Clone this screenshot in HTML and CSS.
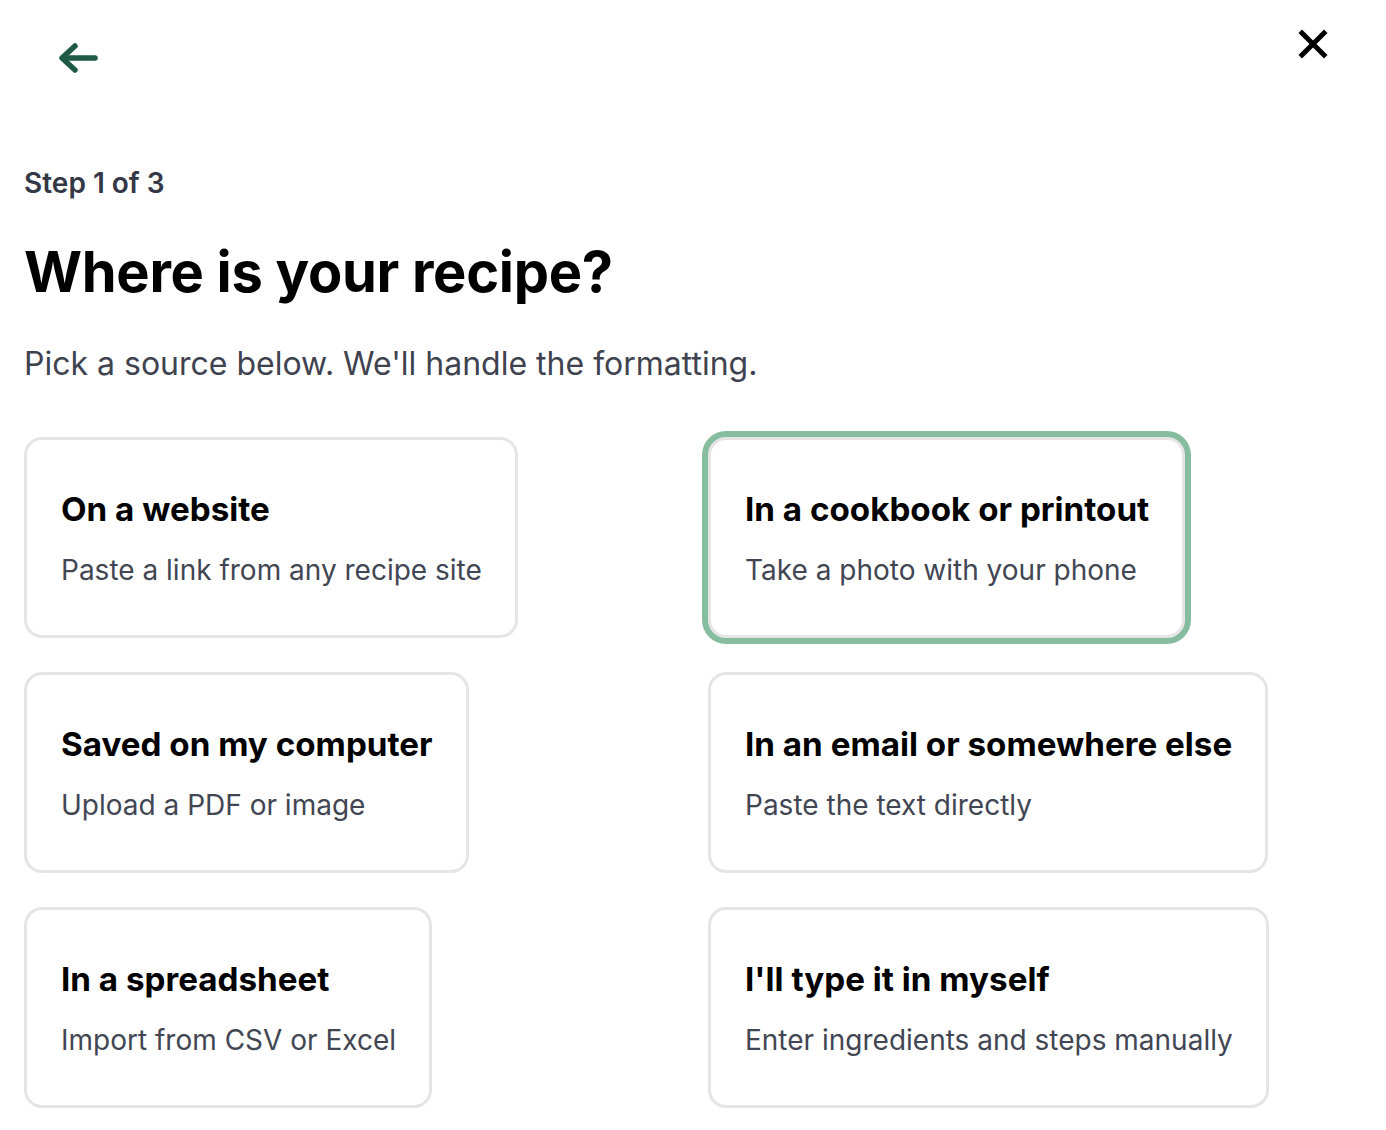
FILE: index.html
```html
<!DOCTYPE html>
<html lang="en">
<head>
<meta charset="utf-8">
<title>Where is your recipe?</title>
<link rel="stylesheet" href="styles.css">
</head>
<body>
<div class="page">
  <header class="topbar">
    <button class="icon-btn back" aria-label="Back">
      <svg width="42" height="32" viewBox="0 0 42 32" fill="none" stroke="#1f5a44" stroke-width="5.5" stroke-linecap="round" stroke-linejoin="round">
        <path d="M37 16 H5"/>
        <path d="M17 4 L4 16 L17 28"/>
      </svg>
    </button>
    <button class="icon-btn close" aria-label="Close">
      <svg width="30" height="30" viewBox="0 0 30 30" fill="none" stroke="#000" stroke-width="5" stroke-linecap="square">
        <path d="M4 4 L26 26"/>
        <path d="M26 4 L4 26"/>
      </svg>
    </button>
  </header>

  <main class="content">
    <p class="step">Step 1 of 3</p>
    <h1 class="title">Where is your recipe?</h1>
    <p class="lead">Pick a source below. We'll handle the formatting.</p>

    <div class="options">
      <div class="card">
        <h2 class="card-title">On a website</h2>
        <p class="card-sub">Paste a link from any recipe site</p>
      </div>
      <div class="card selected">
        <h2 class="card-title">In a cookbook or printout</h2>
        <p class="card-sub">Take a photo with your phone</p>
      </div>
      <div class="card">
        <h2 class="card-title">Saved on my computer</h2>
        <p class="card-sub">Upload a PDF or image</p>
      </div>
      <div class="card">
        <h2 class="card-title">In an email or somewhere else</h2>
        <p class="card-sub">Paste the text directly</p>
      </div>
      <div class="card">
        <h2 class="card-title">In a spreadsheet</h2>
        <p class="card-sub">Import from CSV or Excel</p>
      </div>
      <div class="card">
        <h2 class="card-title">I'll type it in myself</h2>
        <p class="card-sub">Enter ingredients and steps manually</p>
      </div>
    </div>
  </main>
</div>
</body>
</html>
```

FILE: styles.css
```css
* { box-sizing: border-box; }

html, body {
  margin: 0;
  padding: 0;
  background: #ffffff;
}

body {
  font-family: Inter, "Noto Sans", sans-serif;
  color: #000;
}

.page {
  width: 1386px;
  min-height: 1130px;
}

.topbar {
  display: flex;
  justify-content: space-between;
  align-items: flex-start;
  padding: 29px 58px 0 58px;
  height: 166px;
}

.icon-btn {
  background: none;
  border: none;
  padding: 0;
  margin: 0;
  display: block;
  cursor: pointer;
}

.back { margin-top: 13px; }
.back svg, .close svg { display: block; }

.content {
  padding: 0 24px;
}

.step {
  margin: 0;
  font-size: 28px;
  line-height: 34px;
  font-weight: 600;
  color: #343846;
}

.title {
  margin: 38px 0 0 0;
  font-size: 56px;
  line-height: 68px;
  font-weight: 700;
  letter-spacing: -0.3px;
  color: #000;
}

.lead {
  margin: 38px 0 0 0;
  font-size: 32px;
  line-height: 40px;
  font-weight: 400;
  color: #3f4350;
}

.options {
  margin-top: 53px;
  display: grid;
  grid-template-columns: 1fr 1fr;
  column-gap: 30px;
  row-gap: 34px;
}

.card {
  justify-self: start;
  border: 3px solid #e5e5e5;
  border-radius: 18px;
  padding: 49px 33px 0 34px;
  height: 201px;
  background: #fff;
}

.card.selected {
  box-shadow: 0 0 0 6px #87bd9f;
}

.card-title {
  margin: 0;
  font-size: 33.2px;
  line-height: 40px;
  font-weight: 700;
  color: #000;
}

.card-sub {
  margin: 23px 0 0 0;
  font-size: 28px;
  line-height: 36px;
  font-weight: 400;
  color: #424653;
}
```
